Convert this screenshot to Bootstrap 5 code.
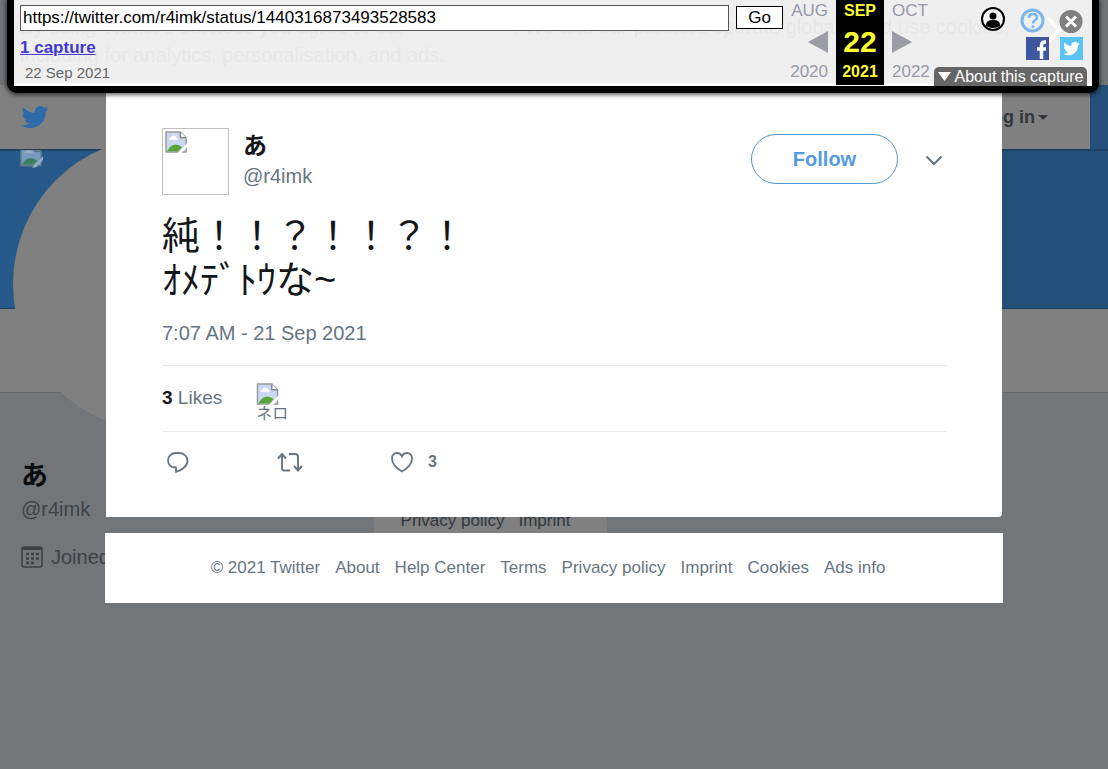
<!DOCTYPE html>
<html lang="en">
<head>
<meta charset="utf-8">
<meta name="viewport" content="width=device-width, initial-scale=1">
<title>@r4imk on Twitter</title>
<link href="https://cdn.jsdelivr.net/npm/bootstrap@5.3.0/dist/css/bootstrap.min.css" rel="stylesheet">
<style>
body{font-family:"Liberation Sans","Noto Sans CJK JP",sans-serif;background:#727679;color:#66757f;min-height:100vh;overflow-x:hidden}
a{color:inherit;text-decoration:none}
/* dimmed profile page */
.cookie-space{height:85px;background:#707477}
.blue-zone{background:#244f78}
.site-nav{height:64px;margin-right:18px;background:#808080;z-index:2;padding:0 42px 0 21px}
.home{color:#2c6ba8}
.login{font-size:18px;font-weight:700;color:#33373c}
.login::after{margin-left:3px;vertical-align:3px}
.cover{height:160px;border-top:2px solid #1d4266;border-bottom:1px solid #1d4266;background:linear-gradient(90deg,#265a8a 0,#244f78 60%)}
.disc{left:13px;top:-14px;width:294px;height:294px;background:#808080}
.cover-pic{left:20px;top:-1px;opacity:.5}
.stats-bar{height:84px;background:#808080;border-bottom:1px solid #686b6e}
.profile{padding:66px 21px 0;color:#3c4248;font-size:20px;line-height:24px}
.profile h1{font-size:27px;line-height:34px;color:#0a0b0d}
.legal-peek{left:374px;top:502px;width:233px;height:40px;padding-right:10px;background:#808080;color:#33393f;font-size:17px;line-height:38px;gap:14px}
/* tweet overlay */
.overlay{z-index:5}
.tweet{max-width:896px;padding:128px 56px 40px;background:#fff;border-radius:0 0 4px 0;min-height:517px}
.avatar{width:67px;height:67px;border:1px solid #c0c0c0;padding:2px}
.who{font-size:20px;line-height:24px;margin-left:14px}
.who h2{font-size:24px;line-height:36px;color:#14171a}
.follow{width:147px;height:50px;margin-top:6px;border:1px solid #4a99d6;color:#549be0;font-size:20px;font-weight:700}
.tweet-text{font-size:38px;line-height:44px;color:#14171a;margin-top:19px}
.stamp{font-size:20px;line-height:24px;margin-top:19px}
.likes{border-top:1px solid #e6ecf0;border-bottom:1px solid #e6ecf0;height:67px;margin-top:20px;font-size:19px;gap:34px}
.likes strong{color:#14171a}
.fan{font-size:16px;line-height:16px}
.acts{margin-top:17px;gap:86px}
.acts button{color:#66757f;font-size:16px;font-weight:700;line-height:26px;gap:14px}
.foot{max-width:898px;height:70px;margin-top:16px;padding-right:12px;background:#fff;font-size:17px;gap:15px}
/* archive toolbar */
.archive{left:7px;right:9px;top:0;z-index:10;border:7px solid #000;border-top:0;border-radius:0 0 10px 10px;background:#efefef;height:93px;box-shadow:0 1px 4px 1px rgba(0,0,0,.6);padding:0 5px 0 6px}
.archive::after{content:"";position:absolute;left:0;right:0;bottom:0;height:3px;background:#fff;z-index:0}
.notice{left:6px;right:75px;top:13px;font-size:20px;line-height:28px;color:#e7e7e7}
.bar-left{z-index:1;padding-top:5px}
.url{height:26px;border:1px solid #555;border-radius:0;font-size:17px;padding:0 2px 1px;color:#000;background:#fff;min-width:0}
.go{width:47px;height:23px;margin:1px 0 0 7px;border:1px solid #000;background:#fff;color:#000;font-size:17px;line-height:20px}
.captures{font-size:17px;line-height:20px;margin-top:7px;font-weight:700;color:#4338d0}
.range{font-size:15px;line-height:20px;margin-top:5px;padding-left:5px;color:#666}
.cal{z-index:1;color:#9999aa;font-size:17px;line-height:20px;height:85px}
.cal>div{padding:1px 0 3px}
.cal .side{width:53px;padding-left:8px;padding-right:8px}
.cal .side.next{width:50px;padding-right:0}
.cal .now{width:48px;background:#000;color:#ffff33;font-weight:700;font-size:16px}
.cal .now b{font-size:30px;line-height:40px}
.tools{z-index:1;width:153px;height:86px}
.about{background:#666;color:#fff;border-radius:5px 5px 0 0;font-size:16px;line-height:19px;height:19px;gap:4px}
.tool-grid{padding:7px 3px 0 0}
</style>
</head>
<body class="position-relative">
<svg class="d-none" aria-hidden="true">
  <symbol id="bird" viewBox="0 0 24 24"><path d="M23.6 4.9c-.85.38-1.77.63-2.73.75.98-.59 1.74-1.52 2.09-2.63-.92.55-1.94.94-3.02 1.16a4.76 4.76 0 0 0-8.1 4.34C7.87 8.32 4.37 6.42 2.03 3.55A4.76 4.76 0 0 0 3.5 9.9c-.78-.02-1.52-.24-2.16-.6v.06a4.76 4.76 0 0 0 3.82 4.67c-.7.19-1.44.22-2.15.08a4.76 4.76 0 0 0 4.45 3.3A9.55 9.55 0 0 1 .4 19.4a13.46 13.46 0 0 0 7.3 2.14c8.75 0 13.54-7.25 13.54-13.54l-.02-.62c.93-.67 1.74-1.5 2.38-2.48z" fill="currentColor"/></symbol>
  <symbol id="broken" viewBox="0 0 24 24"><path d="M1 1h15l6 6v15H1z" fill="#cbd8f4" stroke="#9a9a9a" stroke-width="1.5"/><path d="M16 1v6h6" fill="#fff" stroke="#8a8a8a" stroke-width="1.5"/><path d="M4 9q0-2 2-2 1-3 4-2 2 0 2 2 2 0 2 2z" fill="#fff"/><path d="M2 21q4-7 9-7 4 0 7 3l-4 4z" fill="#57a637"/><path d="M12 24 24 12v4l-8 8z" fill="#fff"/></symbol>
</svg>

<div class="cookie-space"></div>
<div class="blue-zone">
  <nav class="site-nav position-relative d-flex align-items-center justify-content-between">
    <a href="#" class="home" aria-label="Twitter"><svg width="28" height="28"><use href="#bird"/></svg></a>
    <a href="#" class="login dropdown-toggle">Log in</a>
  </nav>
</div>
<div class="cover position-relative">
  <div class="disc position-absolute rounded-circle"></div>
  <svg class="cover-pic position-absolute" width="23" height="18" viewBox="0 6 24 18"><use href="#broken" width="24" height="24"/></svg>
</div>
<div class="stats-bar"></div>
<section class="profile">
  <h1 class="fw-bold mb-0">あ</h1>
  <div class="mt-1">@r4imk</div>
  <div class="d-flex align-items-center gap-2 mt-4">
    <svg width="22" height="22" viewBox="0 0 22 22" fill="none" stroke="currentColor"><rect x="1" y="1" width="20" height="20" rx="2" stroke-width="1.6"/><path d="M1 2.500h20" stroke-width="3"/><path d="M5 8h13M5 12.500h13M5 17h9" stroke-width="2.400" stroke-dasharray="3 2"/></svg>
    Joined
  </div>
</section>
<div class="legal-peek position-absolute d-flex justify-content-center"><span>Privacy policy</span><span>Imprint</span></div>

<main class="overlay position-absolute top-0 start-0 w-100">
  <article class="tweet mx-auto">
    <header class="d-flex align-items-start">
      <div class="avatar"><svg class="d-block" width="23" height="23"><use href="#broken"/></svg></div>
      <div class="who"><h2 class="fw-bold mb-0">あ</h2>@r4imk</div>
      <button class="follow btn rounded-pill ms-auto p-0">Follow</button>
      <button class="btn p-0 border-0 ms-4 mt-3 pt-2" aria-label="More"><svg class="d-block" width="24" height="16" viewBox="0 0 24 16" fill="none" stroke="#66757f" stroke-width="2"><path d="M4.500 4.500 12 12l7.500-7.500"/></svg></button>
    </header>
    <p class="tweet-text mb-0" lang="ja">純！！？！！？！<br>ｵﾒﾃﾞﾄｳな~</p>
    <div class="stamp">7:07 AM - 21 Sep 2021</div>
    <div class="likes d-flex align-items-center">
      <span><strong>3</strong> Likes</span>
      <a href="#" class="fan pt-2"><svg class="d-block" width="24" height="23"><use href="#broken"/></svg>ネロ</a>
    </div>
    <div class="acts d-flex">
      <button class="btn border-0 p-0 d-flex align-items-center" aria-label="Reply"><svg width="28" height="26" viewBox="0 0 28 26" fill="none" stroke="currentColor" stroke-width="1.800" stroke-linejoin="round"><path d="M14 18.500v4.500c5-1.500 11.500-5.500 11.500-11 0-4.500-3.500-8-8-8h-3.500C9.500 4 6 7 6 11.500s3.500 7 8 7z"/></svg></button>
      <button class="btn border-0 p-0 d-flex align-items-center" aria-label="Retweet"><svg width="28" height="26" viewBox="0 0 28 26" fill="none" stroke="currentColor" stroke-width="1.900"><path d="M2 9.500 6 5l4 4.500M6 5v14q0 2.500 2.500 2.500H14M13 5h6q3 0 3 3v13.500M18 17l4 4.500 4-4.500"/></svg></button>
      <button class="btn border-0 p-0 d-flex align-items-center" aria-label="Like"><svg width="24" height="26" viewBox="0 0 24 26" fill="none" stroke="currentColor" stroke-width="1.800"><path d="M12 22.500C7 19.500 2 14.500 2 9.500 2 6 4.300 4 7 4c2.300 0 4 1.200 5 3.500C13 5.200 14.700 4 17 4c2.700 0 5 2 5 5.500 0 5-5 10-10 13z"/></svg>3</button>
    </div>
  </article>
  <footer class="foot mx-auto d-flex align-items-center justify-content-center">
    <span>© 2021 Twitter</span><a href="#">About</a><a href="#">Help Center</a><a href="#">Terms</a><a href="#">Privacy policy</a><a href="#">Imprint</a><a href="#">Cookies</a><a href="#">Ads info</a>
  </footer>
</main>

<div class="archive position-absolute d-flex">
  <div class="notice position-absolute">By using Twitter's services you agree to our <span class="invisible">Cookie Use</span>. We and our partners operate globally and use cookies,<br>including for analytics, personalisation, and ads.</div>
  <div class="bar-left position-relative flex-grow-1">
    <form class="d-flex">
      <input class="url flex-grow-1" type="text" aria-label="Address" value="https://twitter.com/r4imk/status/1440316873493528583">
      <button type="button" class="go btn rounded-0 p-0">Go</button>
    </form>
    <div class="captures"><a href="#" class="text-decoration-underline">1 capture</a></div>
    <div class="range">22 Sep 2021</div>
  </div>
  <div class="cal position-relative d-flex">
    <div class="side d-flex flex-column justify-content-between align-items-end"><span>AUG</span><svg width="20" height="22"><path d="M0 11 20 0v22z" fill="#9c9ca6"/></svg><span>2020</span></div>
    <div class="now d-flex flex-column justify-content-between align-items-center"><span>SEP</span><b>22</b><span>2021</span></div>
    <div class="side next d-flex flex-column justify-content-between align-items-start"><span>OCT</span><svg width="20" height="22"><path d="M20 11 0 0v22z" fill="#9c9ca6"/></svg><span>2022</span></div>
  </div>
  <div class="tools position-relative d-flex flex-column justify-content-between">
    <div class="tool-grid d-flex justify-content-end">
      <svg width="104" height="54" viewBox="980 7 104 54">
        <path d="M1048 18l11 12-11 12" fill="none" stroke="#fff" stroke-width="4"/>
        <circle cx="993" cy="19" r="11" fill="#f4f4f4" stroke="#000" stroke-width="2"/><circle cx="993" cy="16" r="3.500"/><path d="M986 26v-1q0-5 7-5t7 5v1q-7 4-14 0z"/>
        <circle cx="1032.500" cy="20.500" r="10.500" fill="#efefef" stroke="#7ab6ec" stroke-width="3"/><path d="M1029 18q0-4 4-4t4 3.500c0 3-4 2.500-4 6" fill="none" stroke="#7ab6ec" stroke-width="2.500"/><circle cx="1033" cy="26.500" r="1.500" fill="#7ab6ec"/>
        <circle cx="1071" cy="21.500" r="11.500" fill="#808080"/><path d="M1066 16.500l10 10m0-10-10 10" stroke="#fff" stroke-width="3"/>
        <path d="M1026 37h23v23h-23z" fill="#3f579d"/><path d="M1046 42h-1q-3.500 0-3.500 3.500V59M1037 49h9" fill="none" stroke="#fff" stroke-width="3.500"/>
        <path d="M1060 37h23v23h-23z" fill="#5bc2f7"/><use href="#bird" x="1063" y="40" width="17" height="17" color="#fff"/>
      </svg>
    </div>
    <button class="about border-0 p-0 d-flex align-items-center justify-content-center"><svg width="13" height="9"><path d="M0 0h13L6.500 9z" fill="#fff"/></svg>About this capture</button>
  </div>
</div>
<script src="https://cdn.jsdelivr.net/npm/bootstrap@5.3.0/dist/js/bootstrap.bundle.min.js"></script>
</body>
</html>
